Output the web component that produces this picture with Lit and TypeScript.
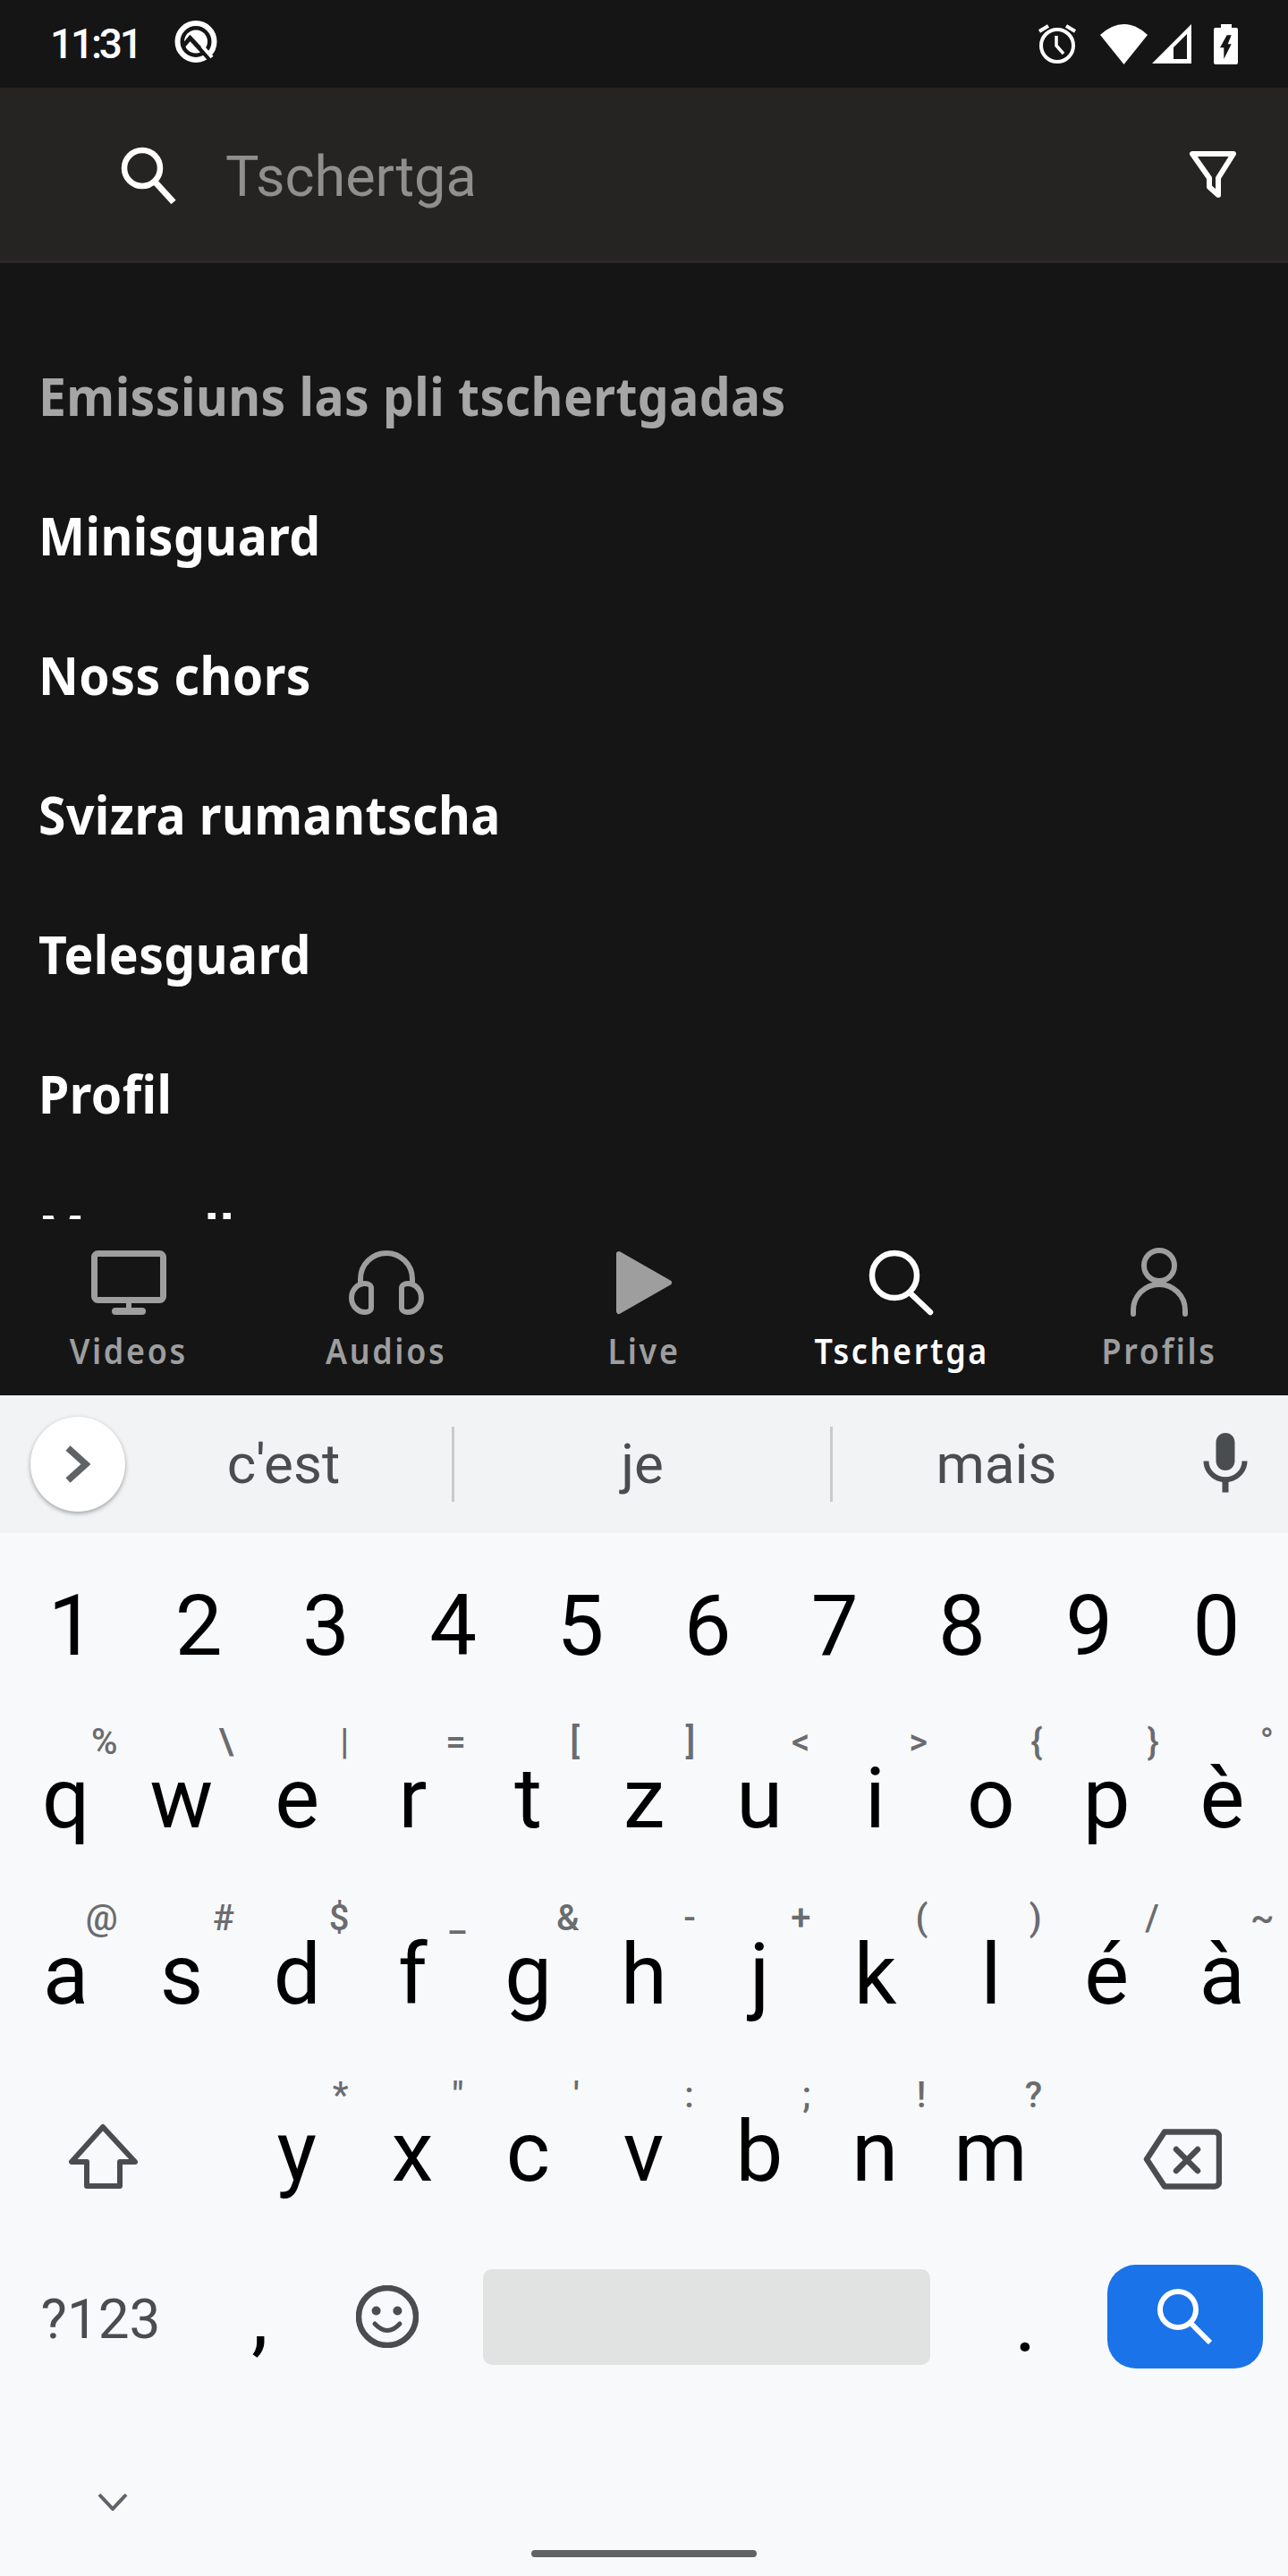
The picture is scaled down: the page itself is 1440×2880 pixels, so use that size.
import { LitElement, html, css, svg } from "lit";
import { customElement } from "lit/decorators.js";

type K = [string, string, number];
const row2: K[] = [["q","%",43],["w","\\",50],["e","|",53],["r","=",48],["t","[",52],["z","]",52],["u","<",46],["i",">",48],["o","{",51],["p","}",52],["è","°",50]];
const row3: K[] = [["a","@",40],["s","#",47],["d","$",47],["f","_",50],["g","&",44],["h","-",51],["j","+",46],["k","(",52],["l",")",50],["é","/",51],["à","~",45]];
const row4: K[] = [["y","*",49],["x","\"",51],["c","'",54],["v",":",51],["b",";",53],["n","!",52],["m","?",48]];
const items = ["Minisguard","Noss chors","Svizra rumantscha","Telesguard","Profil","Mosaull"];
const nav: [string, ReturnType<typeof svg>, boolean][] = [
  ["Videos", svg`<rect x="3.5" y="9.5" width="77" height="52" rx="4" fill="none" stroke="currentColor" stroke-width="7"/><rect x="39" y="64" width="6" height="8" fill="currentColor"/><rect x="23" y="70" width="38" height="8" rx="4" fill="currentColor"/>`, false],
  ["Audios", svg`<g fill="none" stroke="currentColor" stroke-width="6" stroke-linejoin="round"><path d="M13 44V38a29 29 0 0 1 58 0V44"/><path d="M18 43c-8 0-15 7-15 16s7 16 15 16c4 0 7-2 7-5V48c0-3-3-5-7-5z"/><path d="M66 43c8 0 15 7 15 16s-7 16-15 16c-4 0-7-2-7-5V48c0-3 3-5 7-5z"/></g>`, false],
  ["Live", svg`<path d="M14 10L70 42L14 74Z" fill="currentColor" stroke="currentColor" stroke-width="6" stroke-linejoin="round"/>`, false],
  ["Tschertga", svg`<g fill="none" stroke="currentColor" stroke-width="6.5" stroke-linecap="round"><circle cx="34" cy="34" r="25"/><path d="M51 53L74 75"/></g>`, true],
  ["Profils", svg`<g fill="none" stroke="currentColor" stroke-width="6" stroke-linecap="round"><circle cx="42" cy="23" r="17"/><path d="M13 77V73a29 29 0 0 1 58 0V77"/></g>`, false],
];

@customElement("app-root")
export class AppRoot extends LitElement {
  static styles = css`
    :host { display: block; width: 1440px; height: 2880px; background: #151516; font-family: "Roboto", sans-serif; overflow: hidden; }
    svg { display: block; flex: none; }
    .status { height: 98px; background: #151516; display: flex; align-items: center; padding: 0 56px 0 56px; box-sizing: border-box; color: #fff; }
    .time { font-size: 46px; font-weight: 500; letter-spacing: -3.2px; width: 139px; line-height: 98px; }
    .qlogo { margin-top: -4px; }
    .spacer { flex: 1; }
    .search { height: 196px; background: #262323; border-bottom: 3px solid #2a2828; box-sizing: border-box; display: flex; align-items: center; padding: 0 58px 0 130px; }
    .ph { font-size: 63px; color: #8f8f8f; margin-left: 52px; flex: 1; padding-top: 6px; }
    .list { height: 1069px; overflow: hidden; padding: 70px 0 0 43px; box-sizing: border-box; font-family: "Noto Sans", sans-serif; font-weight: 700; font-size: 60px; line-height: 156px; letter-spacing: 0.5px; color: #fff; }
    .list div { height: 156px; white-space: nowrap; transform: scaleX(0.92); transform-origin: left center; }
    .list .head { color: #a6a6a6; }
    .nav { height: 197px; display: grid; grid-template-columns: repeat(5, 288px); background: #151516; }
    .tab { display: flex; flex-direction: column; align-items: center; padding-top: 29px; color: #9e9e9e; }
    .tab.on { color: #fff; }
    .tab span { font-family: "Noto Sans", sans-serif; font-weight: 600; font-size: 39px; line-height: 50px; margin-top: 9px; letter-spacing: 2.9px; transform: scaleX(0.92); white-space: nowrap; }
    .kb { height: 1320px; background: #f8f9fb; }
    .strip { height: 154px; background: #f2f3f5; display: flex; align-items: center; padding-left: 34px; color: #4a4d50; font-size: 62px; }
    .circle { width: 106px; height: 106px; border-radius: 50%; background: #fff; box-shadow: 0 2px 5px rgba(0,0,0,.35); display: flex; align-items: center; justify-content: center; flex: none; }
    .sug { text-align: center; line-height: 156px; flex: none; }
    .s1 { width: 365px; padding-right: 11px; box-sizing: border-box; }
    .s2 { width: 420px; }
    .s3 { width: 366px; }
    .div { width: 3px; height: 84px; background: #c8cacc; flex: none; }
    .mic { margin-left: 31px; fill: #4a4d50; }
    .keys { padding: 6px 9px 0; }
    .row { display: grid; }
    .r1 { height: 193px; grid-template-columns: repeat(10, 1fr); }
    .r2 { height: 197px; grid-template-columns: repeat(11, 1fr); }
    .r3 { height: 198px; grid-template-columns: repeat(11, 1fr); }
    .r4 { height: 196px; grid-template-columns: 258px repeat(7, 129.3px) 1fr; }
    .key { position: relative; height: 196px; line-height: 196px; text-align: center; font-size: 94px; color: #000; }
    .hint { position: absolute; top: 15px; transform: translateX(-50%); font-size: 40px; font-weight: 500; line-height: 40px; color: #6a6c6f; }
    .shift { padding-left: 67px; padding-top: 65px; color: #4a4d50; }
    .back { padding-left: 106px; padding-top: 72px; color: #4a4d50; }
    .bottom { height: 172px; display: flex; align-items: center; padding-left: 9px; }
    .sym { width: 207px; text-align: center; font-size: 62px; color: #4a4d50; padding-top: 4px; }
    .comma { width: 149px; text-align: center; font-size: 94px; line-height: 172px; color: #000; }
    .emoji { margin: 0 72px 0 33px; color: #4a4d50; }
    .space { width: 500px; height: 107px; border-radius: 10px; background: #e1e3e3; flex: none; }
    .period { width: 183px; margin-left: 15px; text-align: center; font-size: 94px; line-height: 172px; padding-top: 12px; color: #000; }
    .go { width: 174px; height: 116px; border-radius: 32px; background: #1a73e8; display: flex; align-items: center; justify-content: center; flex: none; }
    .foot { padding-top: 111px; }
    .chev { margin-left: 109px; }
    .pill { width: 252px; height: 8px; border-radius: 4px; background: #636363; margin: 44px auto 0; }
  `;

  private keyTpl(k: K) {
    return html`<div class="key">${k[0]}<span class="hint" style="left:calc(50% + ${k[2]}px)">${k[1]}</span></div>`;
  }

  render() {
    return html`
      <div class="status">
        <div class="time">11:31</div>
        <svg class="qlogo" width="48" height="48" viewBox="0 0 48 48">
          <circle cx="24" cy="23.5" r="20.5" fill="none" stroke="#fff" stroke-width="6"/>
          <circle cx="24" cy="23.5" r="13" fill="#fff"/>
          <path d="M9 29.5L17.5 19.5L43 47" fill="none" stroke="#151516" stroke-width="5"/>
          <path d="M31 28.5L42 41" stroke="#fff" stroke-width="4"/>
        </svg>
        <div class="spacer"></div>
        <svg width="44" height="44" viewBox="0 0 44 44">
          <g fill="none" stroke="#fff">
            <circle cx="22" cy="24" r="18" stroke-width="4"/>
            <path d="M21 13V24L29 33" stroke-width="3.5"/>
            <path d="M2 8L12 2M32 2L42 8" stroke-width="4"/>
          </g>
        </svg>
        <svg style="margin-left:26px" width="53" height="45" viewBox="0 0 53 45"><path d="M0 12Q26.5 -12 53 12L26.5 45Z" fill="#fff"/></svg>
        <svg style="margin-left:5px" width="44" height="44" viewBox="0 0 44 44"><path fill-rule="evenodd" fill="#fff" d="M0 44L44 0V44ZM24 39H39V11L24 26Z"/></svg>
        <svg style="margin-left:25px" width="27" height="45" viewBox="0 0 27 45"><path fill-rule="evenodd" fill="#fff" d="M8 0H20V4H25A2 2 0 0 1 27 6V43A2 2 0 0 1 25 45H2A2 2 0 0 1 0 43V6A2 2 0 0 1 2 4H8ZM14.7 12.3H19.7L15.7 22.3H19.7L11.3 39V26.3H7Z"/></svg>
      </div>
      <div class="search">
        <svg width="70" height="70" viewBox="0 0 70 70"><g fill="none" stroke="#fff"><circle cx="29" cy="28" r="20" stroke-width="6.5"/><path d="M43 43L64 66" stroke-width="7"/></g></svg>
        <div class="ph">Tschertga</div>
        <svg width="52" height="52" viewBox="0 0 52 52"><path d="M3 3H49L32 30V49L22 40V30Z" fill="none" stroke="#fff" stroke-width="6" stroke-linejoin="round"/></svg>
      </div>
      <div class="list">
        <div class="head">Emissiuns las pli tschertgadas</div>
        ${items.map((t) => html`<div>${t}</div>`)}
      </div>
      <div class="nav">
        ${nav.map(([label, icon, on]) => html`
          <div class="tab ${on ? "on" : ""}">
            <svg width="84" height="84" viewBox="0 0 84 84">${icon}</svg>
            <span>${label}</span>
          </div>`)}
      </div>
      <div class="kb">
        <div class="strip">
          <div class="circle"><svg width="28" height="42" viewBox="0 0 28 42"><path d="M3 3L23 21L3 39" fill="none" stroke="#5f6368" stroke-width="7.5"/></svg></div>
          <div class="sug s1">c'est</div>
          <div class="div"></div>
          <div class="sug s2">je</div>
          <div class="div"></div>
          <div class="sug s3">mais</div>
          <svg class="mic" width="84" height="84" viewBox="0 0 24 24"><path d="M12 14c1.66 0 2.99-1.34 2.99-3L15 5c0-1.66-1.34-3-3-3S9 3.34 9 5v6c0 1.66 1.34 3 3 3zm5.3-3c0 3-2.54 5.1-5.3 5.1S6.7 14 6.7 11H5c0 3.41 2.72 6.23 6 6.72V21h2v-3.28c3.28-.48 6-3.3 6-6.72h-1.7z"/></svg>
        </div>
        <div class="keys">
          <div class="row r1">${"1234567890".split("").map((d) => html`<div class="key">${d}</div>`)}</div>
          <div class="row r2">${row2.map((k) => this.keyTpl(k))}</div>
          <div class="row r3">${row3.map((k) => this.keyTpl(k))}</div>
          <div class="row r4">
            <div class="shift"><svg width="78" height="74" viewBox="0 0 78 74"><path d="M39 5L4 44H21V71H58V44H75Z" fill="none" stroke="currentColor" stroke-width="6" stroke-linejoin="round"/></svg></div>
            ${row4.map((k) => this.keyTpl(k))}
            <div class="back"><svg width="88" height="68" viewBox="0 0 88 68"><g fill="none" stroke="currentColor" stroke-width="6.5" stroke-linejoin="round"><path d="M24 3.5H80a5 5 0 0 1 5 5V59.5a5 5 0 0 1-5 5H24L4 34Z"/><path d="M37 23L61 47M61 23L37 47" stroke-linecap="round"/></g></svg></div>
          </div>
        </div>
        <div class="bottom">
          <div class="sym">?123</div>
          <div class="comma">,</div>
          <svg class="emoji" width="70" height="70" viewBox="0 0 70 70"><circle cx="35" cy="35" r="32" fill="none" stroke="currentColor" stroke-width="6.5"/><circle cx="22.6" cy="28.5" r="5" fill="currentColor"/><circle cx="46.4" cy="28.5" r="5" fill="currentColor"/><path d="M21 43Q35 58 49 43" fill="none" stroke="currentColor" stroke-width="5" stroke-linecap="round"/></svg>
          <div class="space"></div>
          <div class="period">.</div>
          <div class="go"><svg width="62" height="62" viewBox="0 0 62 62"><g fill="none" stroke="#fff" stroke-width="6"><circle cx="23" cy="23" r="20"/><path d="M37 38L59 60"/></g></svg></div>
        </div>
        <div class="foot">
          <svg class="chev" width="34" height="20" viewBox="0 0 34 20"><path d="M2 2L17 18L32 2" fill="none" stroke="#5f6368" stroke-width="4"/></svg>
          <div class="pill"></div>
        </div>
      </div>
    `;
  }
}
